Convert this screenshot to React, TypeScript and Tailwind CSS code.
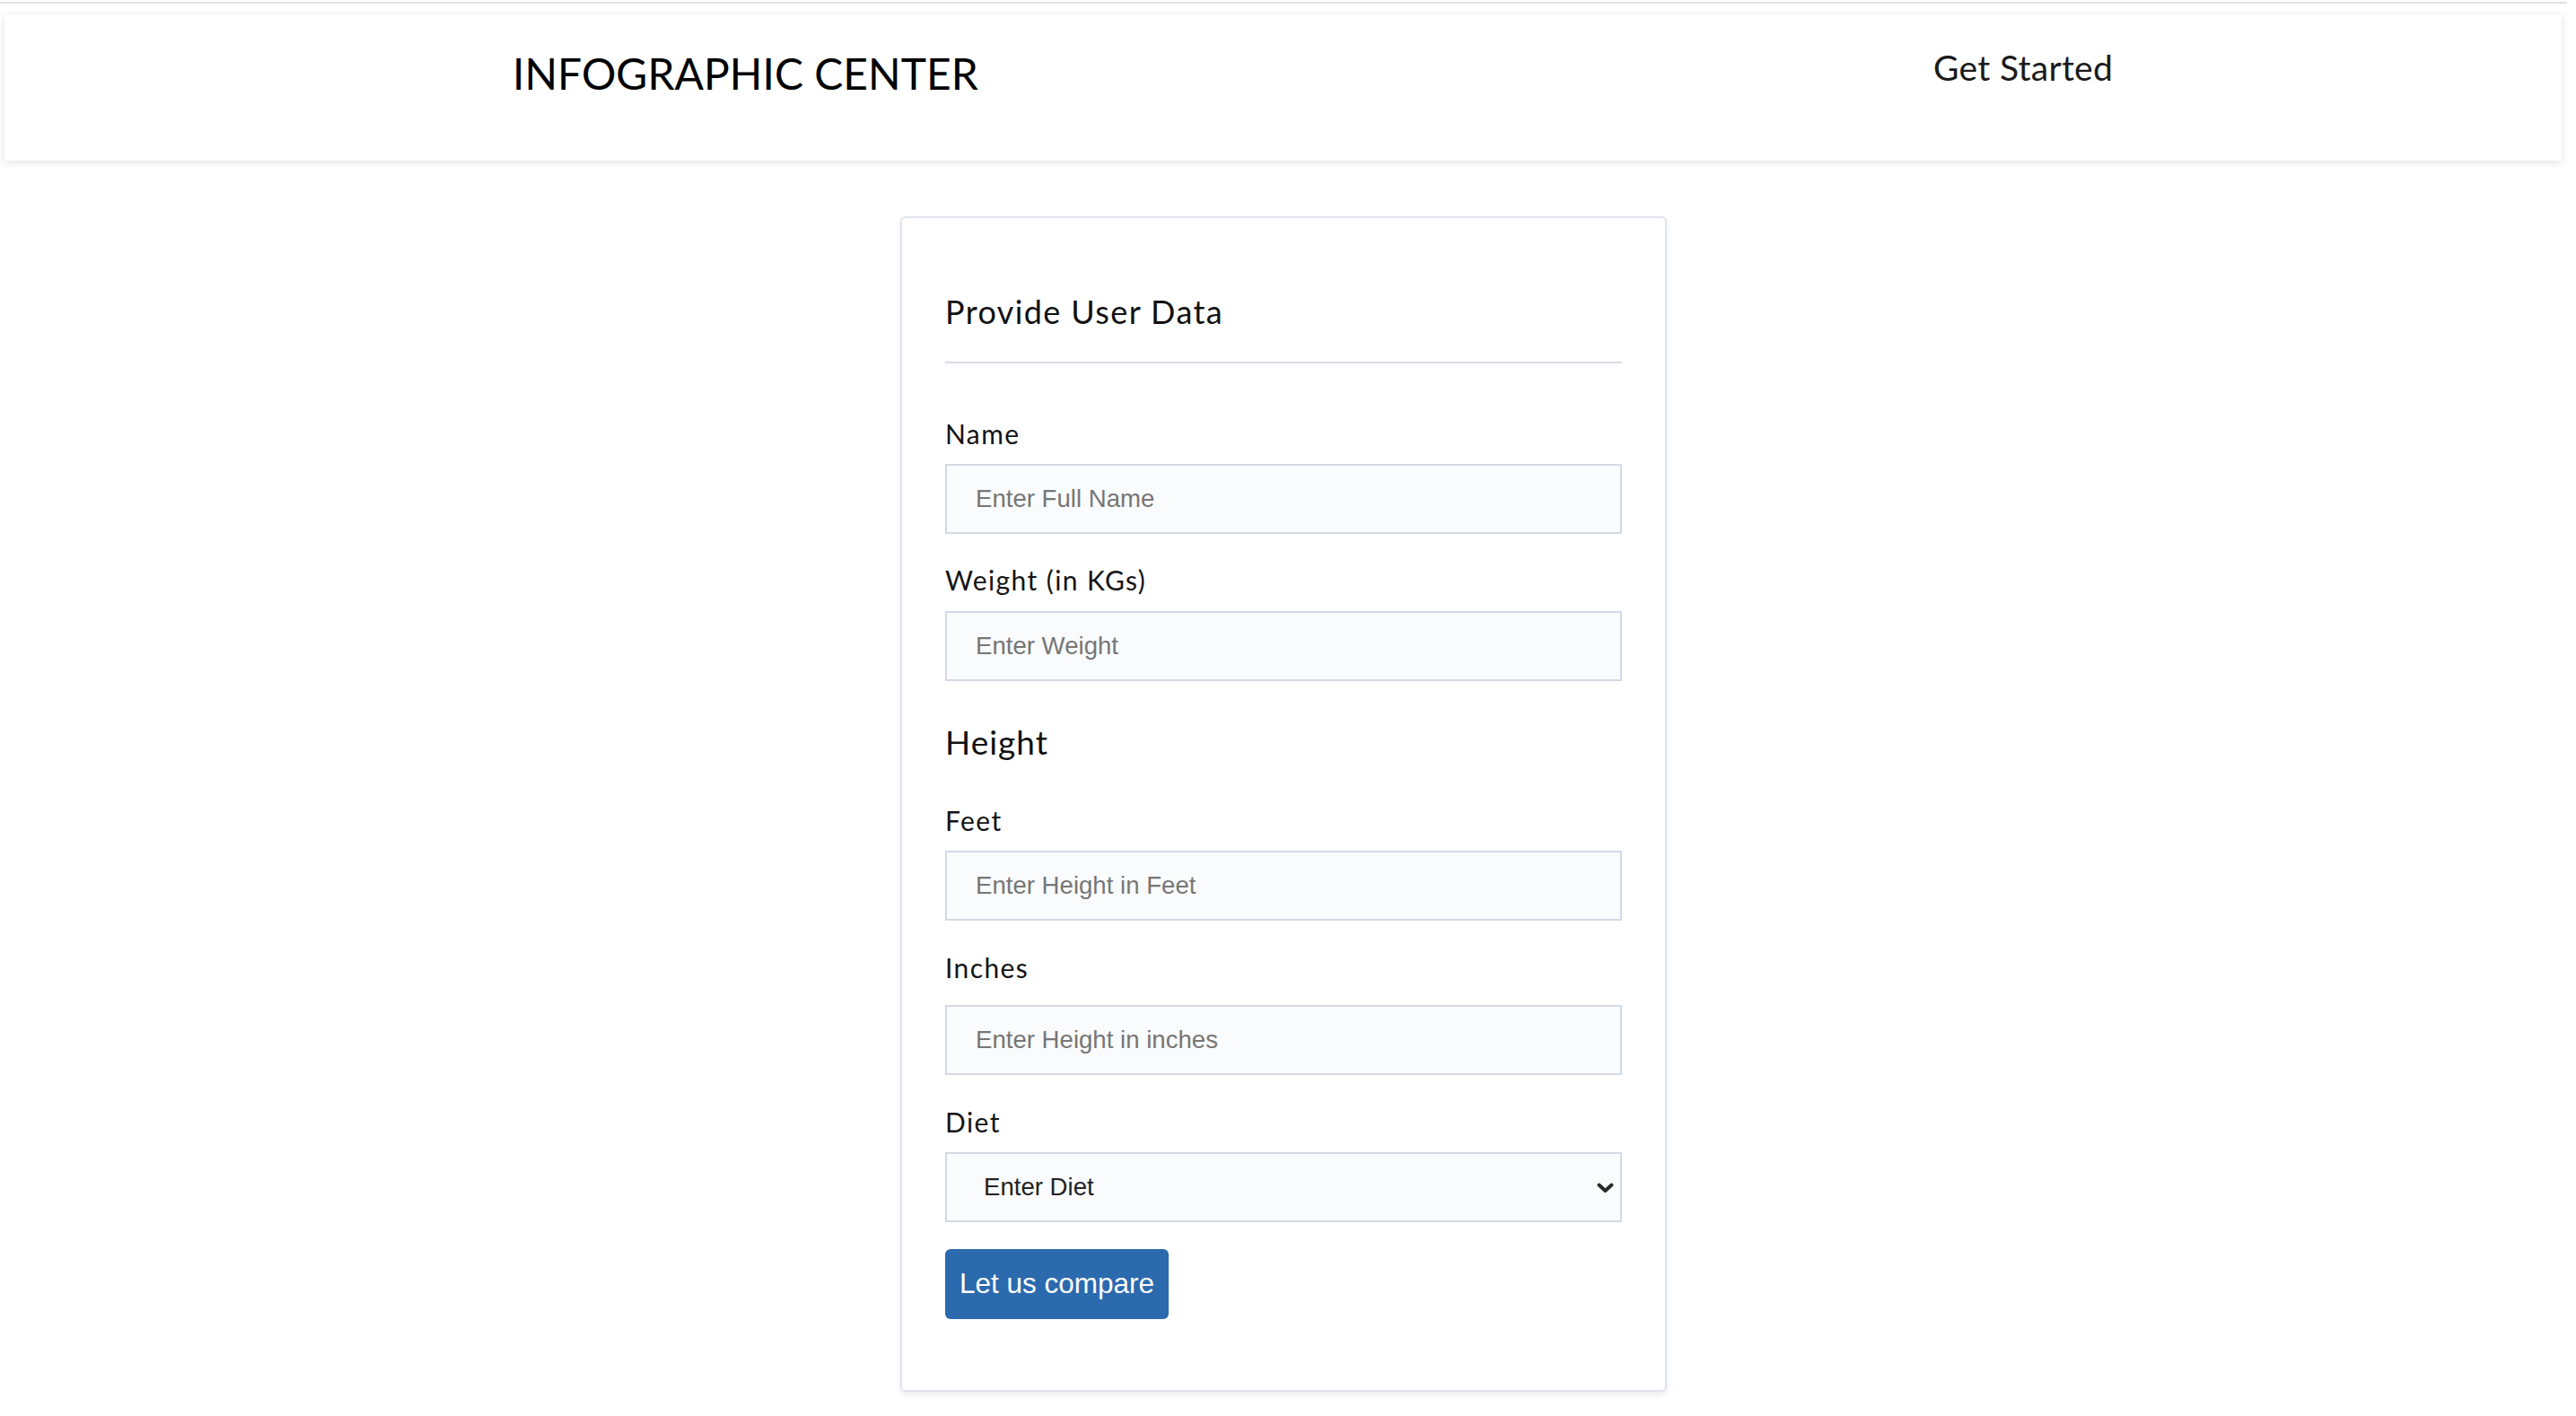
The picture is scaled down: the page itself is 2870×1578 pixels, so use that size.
import React from 'react';

const Label = ({ children, className = '' }: { children: React.ReactNode; className?: string }) => (
  <label className={`block text-[30px] leading-[34px] tracking-[1.4px] text-[#141414] ${className}`}>{children}</label>
);

const Field = ({ placeholder, className = '' }: { placeholder: string; className?: string }) => (
  <input
    type="text"
    placeholder={placeholder}
    className={`block w-full h-[78px] border-2 border-[#d3d9e5] bg-[#fafbfd] pl-[32px] font-['Liberation_Sans',Arial,sans-serif] text-[27.6px] text-[#333] placeholder:text-[#767676] outline-none ${className}`}
  />
);

const App = () => {
  return (
    <div className="min-h-screen bg-white pr-[10px] font-['Lato',sans-serif]">
      <div className="mt-[2px] h-[2px] bg-[#e1e0e7]" />

      <nav className="ml-[5px] mr-[6px] mt-[12px] h-[163px] bg-white shadow-[0_2px_8px_rgba(30,30,60,0.13)]">
        <div className="flex items-start pl-[566px] pt-[38px]">
          <div className="w-[1583px] text-[48px] leading-[56px] text-black">INFOGRAPHIC CENTER</div>
          <a href="#" className="-mt-[2px] text-[39px] leading-[46px] tracking-[0.3px] text-[#1a1a1a]">
            Get Started
          </a>
        </div>
      </nav>

      <div className="mx-auto mt-[62px] w-[854px] rounded-[6px] border-2 border-[#dfe3ec] bg-white px-[48px] pt-[83px] pb-[79px] shadow-[0_3px_6px_rgba(40,50,90,0.10)]">
        <h2 className="text-[36px] leading-[42px] tracking-[1.4px] text-[#111]">Provide User Data</h2>
        <div className="mt-[35px] h-[2px] bg-[#d7dce6]" />

        <Label className="mt-[61px]">Name</Label>
        <Field placeholder="Enter Full Name" className="mt-[17px]" />

        <Label className="mt-[34px]">Weight (in KGs)</Label>
        <Field placeholder="Enter Weight" className="mt-[18px]" />

        <h3 className="mt-[47px] text-[37px] leading-[42px] tracking-[1px] text-[#111]">Height</h3>

        <Label className="mt-[49px]">Feet</Label>
        <Field placeholder="Enter Height in Feet" className="mt-[17px]" />

        <Label className="mt-[35px]">Inches</Label>
        <Field placeholder="Enter Height in inches" className="mt-[25px]" />

        <Label className="mt-[35px]">Diet</Label>
        <div className="relative mt-[17px]">
          <select
            defaultValue=""
            className="block w-full h-[78px] appearance-none border-2 border-[#d3d9e5] bg-[#fafbfd] pl-[41px] font-['Liberation_Sans',Arial,sans-serif] text-[27.6px] text-[#222] outline-none"
          >
            <option value="">Enter Diet</option>
            <option value="veg">Vegetarian</option>
            <option value="nonveg">Non-Vegetarian</option>
            <option value="vegan">Vegan</option>
          </select>
          <svg
            className="pointer-events-none absolute right-[9px] top-[34px]"
            width="19"
            height="12"
            viewBox="0 0 19 12"
            fill="none"
          >
            <polyline points="2.5,2.5 9.5,9 16.5,2.5" stroke="#2a2a2a" strokeWidth="4" strokeLinecap="round" strokeLinejoin="round" />
          </svg>
        </div>

        <button
          type="button"
          className="mt-[30px] h-[78px] rounded-[6px] bg-[#2c6aae] px-[16px] font-['Liberation_Sans',Arial,sans-serif] text-[31.5px] text-white"
        >
          Let us compare
        </button>
      </div>
    </div>
  );
};

export default App;
